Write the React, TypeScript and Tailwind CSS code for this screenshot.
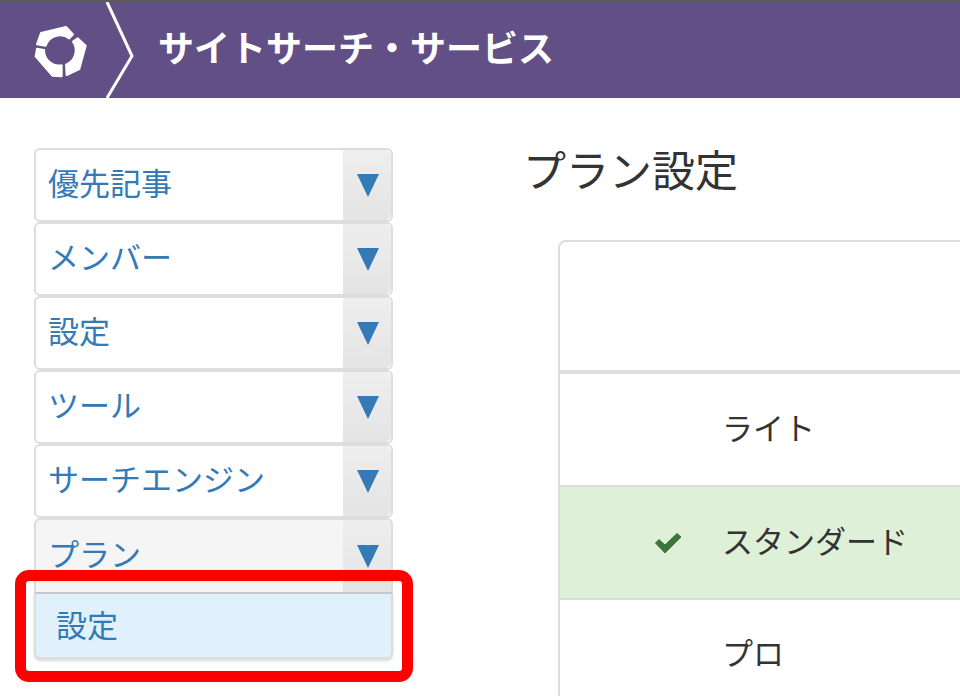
import React from "react";

const font = { fontFamily: '"Noto Sans CJK JP", sans-serif' };

function Logo() {
  return (
    <svg width="70" height="70" viewBox="0 0 210 210" className="shrink-0">
      <g fill="#fff" stroke="#fff" strokeWidth="6" strokeLinejoin="round">
        <path d="M48 54 L123 36 L144 58 L133 70 A46 46 0 0 0 62 92 L36 88 Z" />
        <path d="M158 70 L182 92 L163 162 L125 180 L123 149 A46 46 0 0 0 144 80 Z" />
        <path d="M36 101 L57 105 A46 46 0 0 0 110 151 L110 184 L82 182 L32 124 Z" />
      </g>
    </svg>
  );
}

function Item({ label, x = "pl-[12px]", open = false }: { label: string; x?: string; open?: boolean }) {
  return (
    <div className={`flex items-stretch h-[74px] ${open ? "rounded-t-md bg-[#f5f5f5] border-2 border-b-0 border-[#dddddd]" : "rounded-md bg-white border-2 border-[#dddddd]"}`}>
      <div className={`flex-1 flex items-center pb-[7px] text-[31px] leading-none text-[#337ab7] ${x}`}>{label}</div>
      <div className={`w-[48px] pl-[2px] flex items-center justify-center bg-gradient-to-b from-[#eeeeee] to-[#e4e4e4] ${open ? "rounded-tr-md" : "rounded-r-md"}`}>
        <svg width="24" height="24" viewBox="0 0 24 24"><path d="M1 1 H23 L12 24 Z" fill="#337ab7" /></svg>
      </div>
    </div>
  );
}

function Row({ label, ok = false, h, border = true }: { label: string; ok?: boolean; h: string; border?: boolean }) {
  return (
    <div className={`flex items-center ${h} ${ok ? "bg-[#dff0d8]" : "bg-white"} ${border ? "border-b-2 border-[#dddddd]" : ""}`}>
      <div className="w-[162px] pl-[94px] shrink-0 flex items-center">
        {ok && (
          <svg width="28" height="22" viewBox="0 0 28 22">
            <path d="M1.5 11 L5 7.5 L11 13 L23 1.5 L27 5 L11 21 Z" fill="#3c763d" stroke="#3c763d" strokeWidth="1" strokeLinejoin="round" />
          </svg>
        )}
      </div>
      <div className="pb-[7px] text-[31px] leading-none text-[#333333] whitespace-nowrap">{label}</div>
    </div>
  );
}

export default function App() {
  return (
    <div className="w-[960px] h-[696px] overflow-hidden bg-white relative" style={font}>
      <header className="h-[98px] bg-[#624f86] border-t-2 border-[#5a5a5a] flex items-center">
        <div className="ml-[25px] w-[70px]"><Logo /></div>
        <svg width="30" height="96" viewBox="0 0 30 96" className="ml-[10px] shrink-0">
          <path d="M2 0 L27 54 L2 96" fill="none" stroke="#fff" strokeWidth="3" />
        </svg>
        <h1 className="ml-[23px] pb-[8px] text-[36px] font-bold leading-none text-white whitespace-nowrap">サイトサーチ・サービス</h1>
      </header>

      <div className="flex items-start">
        <nav className="w-[359px] ml-[34px] mt-[50px] shrink-0">
          <Item label="優先記事" />
          <Item label="メンバー" />
          <Item label="設定" />
          <Item label="ツール" />
          <Item label="サーチエンジン" />
          <Item label="プラン" open />
          <div className="h-[67px] flex items-center pb-[4px] pl-[20px] text-[31px] leading-none text-[#337ab7] bg-[#e1f1fb] border-2 border-[#dddddd] border-t-[#c4c8cc] rounded-b-md shadow-[0_2px_3px_rgba(0,0,0,0.15)]">設定</div>
        </nav>

        <main className="ml-[130px] flex-1 min-w-0">
          <h2 className="mt-[44px] text-[43px] leading-[52px] font-normal text-[#333333] whitespace-nowrap">プラン設定</h2>
          <div className="mt-[46px] ml-[35px] w-[600px] border-2 border-[#dddddd] rounded-t-lg">
            <div className="h-[132px] border-b-4 border-[#dddddd]" />
            <Row label="ライト" h="h-[113px]" />
            <Row label="スタンダード" ok h="h-[113px]" />
            <Row label="プロ" h="h-[110px]" border={false} />
          </div>
        </main>
      </div>

      <div className="absolute left-[15px] top-[570px] w-[398px] h-[112px] border-[11px] border-[#ff0000] rounded-[14px]" />
    </div>
  );
}
